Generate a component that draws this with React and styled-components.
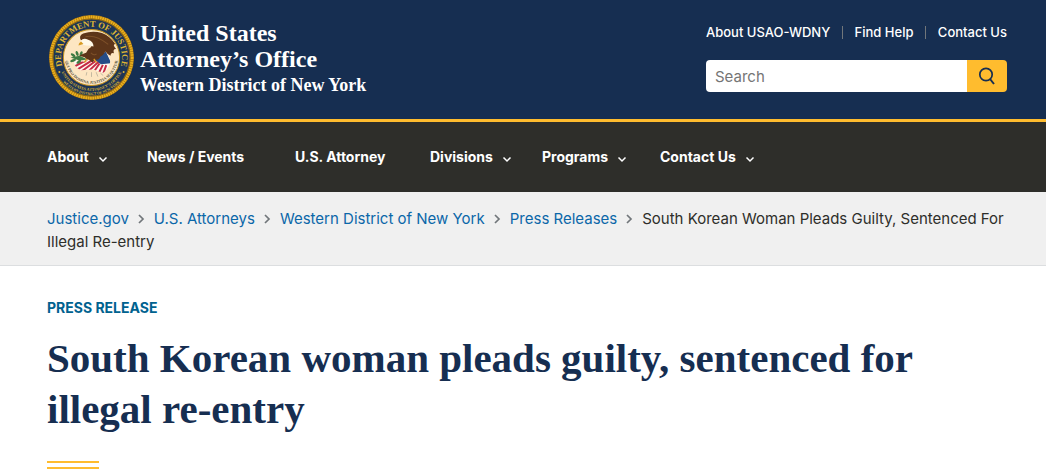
import React from 'react'
import styled, { createGlobalStyle } from 'styled-components'

const NAVY = '#162e51'
const GOLD = '#ffbc2e'
const NAV_COLOR = '#2e2e2a'
const LINK_COLOR = '#0b67a9'
const SANS = "Inter, 'Liberation Sans', sans-serif"
const SERIF = "'Liberation Serif', serif"

const NAV_ITEMS = [
  { label: 'About', menu: true },
  { label: 'News / Events' },
  { label: 'U.S. Attorney' },
  { label: 'Divisions', menu: true },
  { label: 'Programs', menu: true },
  { label: 'Contact Us', menu: true },
]

const CRUMBS = [
  'Justice.gov',
  'U.S. Attorneys',
  'Western District of New York',
  'Press Releases',
]

const GlobalStyle = createGlobalStyle`
  * {
    box-sizing: border-box;
  }

  body {
    margin: 0;
    background-color: #fff;
    color: #1b1b1b;
    font-family: ${SANS};
  }

  a {
    text-decoration: none;
  }
`
const Header = styled.header`
  display: flex;
  justify-content: space-between;
  align-items: flex-start;
  padding: 14px 39px 18px 48px;
  border-bottom: 3px solid ${GOLD};
  background-color: ${NAVY};
`
const Brand = styled.a`
  display: flex;
  gap: 5px;
  color: #fff;
  font-family: ${SERIF};
  font-weight: 700;
`
const Seal = styled.svg`
  display: block;
  width: 87px;
  height: 87px;
`
const BrandText = styled.span`
  display: flex;
  flex-direction: column;
  padding-top: 6px;
`
const BrandName = styled.span`
  font-size: 24px;
  line-height: 26px;
`
const BrandDistrict = styled.span`
  font-size: 18px;
  line-height: 26px;
`
const HeaderTools = styled.div`
  display: flex;
  flex-direction: column;
  gap: 19px;
  padding-top: 10px;
`
const UtilityNav = styled.nav`
  display: flex;
  justify-content: space-between;
  align-items: center;
  height: 17px;
`
const UtilityLink = styled.a`
  color: #fff;
  font-size: 13px;
  font-weight: 500;
  line-height: 17px;
`
const Divider = styled.span`
  width: 1px;
  height: 13px;
  background-color: #71767a;
`
const SearchForm = styled.form`
  display: flex;
  width: 301px;
  height: 32px;
`
const SearchInput = styled.input`
  flex: 1;
  min-width: 0;
  padding: 0 9px;
  border: 0;
  border-radius: 4px 0 0 4px;
  background-color: #fff;
  font-family: ${SANS};
  font-size: 15px;

  &::placeholder {
    color: #757575;
    opacity: 1;
  }
`
const SearchButton = styled.button`
  display: flex;
  justify-content: center;
  align-items: center;
  width: 40px;
  padding: 0;
  border: 0;
  border-radius: 0 4px 4px 0;
  background-color: ${GOLD};
  color: ${NAVY};
  cursor: pointer;
`
const MainNav = styled.nav`
  padding: 0 47px;
  background-color: ${NAV_COLOR};
`
const NavList = styled.ul`
  display: grid;
  grid-template-columns: 100px 148px 135px 112px 118px auto;
  align-items: center;
  margin: 0;
  padding: 25px 0;
  list-style: none;
`
const NavItem = styled.li`
  display: flex;
`
const navItemStyle = `
  display: flex;
  align-items: center;
  gap: 9px;
  padding: 0;
  border: 0;
  background: none;
  color: #fff;
  font-family: ${SANS};
  font-size: 14px;
  font-weight: 700;
  line-height: 20px;
  white-space: nowrap;
  cursor: pointer;
`
const NavLink = styled.a`
  ${navItemStyle}
`
const NavButton = styled.button`
  ${navItemStyle}
`
const NavArrow = styled.svg`
  width: 10px;
  height: 10px;
  margin-top: 3px;
`
const Breadcrumb = styled.nav`
  padding: 15px 39px 12px 47px;
  border-bottom: 1px solid #dcdee0;
  background-color: #f0f0f0;
`
const CrumbList = styled.ol`
  margin: 0;
  padding: 0;
  color: #2e2e2a;
  font-size: 15px;
  line-height: 23px;
  list-style: none;
`
const Crumb = styled.li`
  display: inline;
`
const CrumbLink = styled.a`
  color: ${LINK_COLOR};
`
const CrumbArrow = styled.svg`
  width: 7px;
  height: 10px;
  margin: 0 9px;
`
const Main = styled.main`
  padding: 32px 47px 0;
`
const Kicker = styled.p`
  margin: 0;
  color: #00628f;
  font-size: 14px;
  font-weight: 700;
  line-height: 20px;
  text-transform: uppercase;
`
const Title = styled.h1`
  margin: 15px 0 26px;
  color: ${NAVY};
  font-family: ${SERIF};
  font-size: 41px;
  font-weight: 700;
  line-height: 51px;
`
const Rule = styled.div`
  width: 52px;
  height: 8px;
  border: solid ${GOLD};
  border-width: 2px 0;
`

const DepartmentSeal = () => (
  <Seal viewBox="0 0 260 260" role="img" aria-label="Department of Justice seal">
    <defs>
      <path id="ring-top" d="M46 164 A91 91 0 1 1 214 164" />
      <path id="ring-mid" d="M36 164 A100 100 0 0 0 224 164" />
      <path id="ring-low" d="M24 166 A112 112 0 0 0 236 166" />
      <path id="motto" d="M52 117 A79 79 0 1 0 208 117" />
      <clipPath id="shield">
        <path d="M76 136 L106 143 L142 132 L173 112 L187 138 Q184 163 164 176 L136 166 L97 168 Q77 158 76 136 Z" />
      </clipPath>
    </defs>
    <circle cx="130" cy="130" r="127" fill="#a87510" />
    <circle cx="130" cy="130" r="121" fill="none" stroke="#eab01e" strokeWidth="9" strokeDasharray="5 2" />
    <circle cx="130" cy="130" r="115" fill="#1d3556" stroke="#8a6718" strokeWidth="3" />
    <circle cx="130" cy="130" r="84" fill="#fde6c2" stroke="#c49221" strokeWidth="3" />
    <g fill="#dfb534" fontFamily="Liberation Serif, serif" fontWeight="700">
      <text fontSize="26">
        <textPath href="#ring-top" startOffset="50%" textAnchor="middle">
          DEPARTMENT OF JUSTICE
        </textPath>
      </text>
      <text fontSize="12">
        <textPath href="#ring-mid" startOffset="50%" textAnchor="middle">
          UNITED STATES ATTORNEY’S OFFICE
        </textPath>
      </text>
      <text fontSize="11">
        <textPath href="#ring-low" startOffset="50%" textAnchor="middle">
          WESTERN DISTRICT OF NEW YORK
        </textPath>
      </text>
    </g>
    <text fill="#54513f" fontSize="12" fontFamily="Liberation Serif, serif" fontWeight="700">
      <textPath href="#motto" startOffset="50%" textAnchor="middle">
        QUI PRO DOMINA JUSTITIA SEQUITUR
      </textPath>
    </text>
    <g fill="#dfb534">
      <circle cx="34" cy="173" r="3" />
      <circle cx="226" cy="173" r="3" />
    </g>
    {/* flag shield */}
    <g clipPath="url(#shield)">
      <rect x="70" y="105" width="120" height="75" fill="#fff7ee" />
      <path
        d="M77 158 L118 136 M86 167 L134 137 M100 172 L148 136 M119 173 L151 143 M136 174 L154 148 M151 178 L164 152 M165 179 L174 153"
        stroke="#c52b46"
        strokeWidth="6"
      />
      <path d="M137 134 L173 112 L189 147 L158 150 Z" fill="#254c86" />
    </g>
    {/* olive branch */}
    <g fill="#3f7b43">
      <path d="M67 130 L94 125 L119 136 L94 139 Z" />
      <ellipse cx="75" cy="123" rx="8" ry="4" transform="rotate(35 75 123)" />
      <ellipse cx="87" cy="118" rx="8" ry="4" transform="rotate(70 87 118)" />
      <ellipse cx="99" cy="119" rx="8" ry="4" transform="rotate(110 99 119)" />
      <ellipse cx="75" cy="139" rx="9" ry="4" transform="rotate(-20 75 139)" />
      <ellipse cx="92" cy="143" rx="8" ry="4" transform="rotate(-35 92 143)" />
    </g>
    {/* eagle */}
    <path
      d="M98 78 Q91 65 105 58 Q135 48 161 57 Q186 66 201 90 Q191 91 204 105 Q193 104 197 117 Q187 114 187 125 Q175 118 172 112 Q165 124 156 128 Q153 139 140 136 L133 145 L122 137 Q113 135 110 129 L93 125 Q104 119 114 116 Q119 103 130 98 L121 83 Z"
      fill="#5d3519"
    />
    <path
      d="M112 68 Q143 61 180 91 M128 116 Q139 126 145 119"
      fill="none"
      stroke="#7d5029"
      strokeWidth="3"
    />
    <path d="M98 81 Q105 70 120 77 Q136 82 136 97 L122 94 Q107 96 99 89 Z" fill="#fff9e9" />
    <path d="M99 82 Q91 86 91 94 L106 90 Z" fill="#d79b22" />
    <path d="M116 134 L109 145 M137 134 L145 145" stroke="#d79b22" strokeWidth="4" />
    <g stroke="#a9a392" strokeWidth="2">
      <path d="M116 174 L114 184 M130 174 L130 188 M144 174 L149 187 M157 177 L165 184" />
    </g>
  </Seal>
)

const NavChevron = () => (
  <NavArrow viewBox="0 0 10 10" aria-hidden="true">
    <path d="M1.5 3.5 L5 7 L8.5 3.5" fill="none" stroke="#fff" strokeWidth="1.5" />
  </NavArrow>
)

const CrumbChevron = () => (
  <CrumbArrow viewBox="0 0 7 10" aria-hidden="true">
    <path d="M1 1 L5 5 L1 9" fill="none" stroke="#71767a" strokeWidth="1.7" />
  </CrumbArrow>
)

const Search = () => (
  <SearchForm role="search" onSubmit={(e) => e.preventDefault()}>
    <SearchInput type="search" placeholder="Search" aria-label="Search" />
    <SearchButton type="submit" aria-label="Submit search">
      <svg width="18" height="18" viewBox="0 0 18 18" aria-hidden="true">
        <circle cx="8" cy="7.5" r="6.2" fill="none" stroke="currentColor" strokeWidth="1.7" />
        <path d="M12 12 L16 17" stroke="currentColor" strokeWidth="2" />
      </svg>
    </SearchButton>
  </SearchForm>
)

const App = () => {
  return (
    <>
      <GlobalStyle />
      <Header>
        <Brand href="#home">
          <DepartmentSeal />
          <BrandText>
            <BrandName>United States</BrandName>
            <BrandName>Attorney’s Office</BrandName>
            <BrandDistrict>Western District of New York</BrandDistrict>
          </BrandText>
        </Brand>
        <HeaderTools>
          <UtilityNav aria-label="Utility">
            <UtilityLink href="#about">About USAO-WDNY</UtilityLink>
            <Divider />
            <UtilityLink href="#help">Find Help</UtilityLink>
            <Divider />
            <UtilityLink href="#contact">Contact Us</UtilityLink>
          </UtilityNav>
          <Search />
        </HeaderTools>
      </Header>
      <MainNav aria-label="Primary">
        <NavList>
          {NAV_ITEMS.map(({ label, menu }) => (
            <NavItem key={label}>
              {menu ? (
                <NavButton type="button" aria-expanded="false">
                  {label}
                  <NavChevron />
                </NavButton>
              ) : (
                <NavLink href="#page">{label}</NavLink>
              )}
            </NavItem>
          ))}
        </NavList>
      </MainNav>
      <Breadcrumb aria-label="Breadcrumb">
        <CrumbList>
          {CRUMBS.map((crumb) => (
            <Crumb key={crumb}>
              <CrumbLink href="#crumb">{crumb}</CrumbLink>
              <CrumbChevron />
            </Crumb>
          ))}
          <Crumb aria-current="page">
            South Korean Woman Pleads Guilty, Sentenced For Illegal Re-entry
          </Crumb>
        </CrumbList>
      </Breadcrumb>
      <Main>
        <Kicker>Press Release</Kicker>
        <Title>South Korean woman pleads guilty, sentenced for illegal re-entry</Title>
        <Rule />
      </Main>
    </>
  )
}

export default App
